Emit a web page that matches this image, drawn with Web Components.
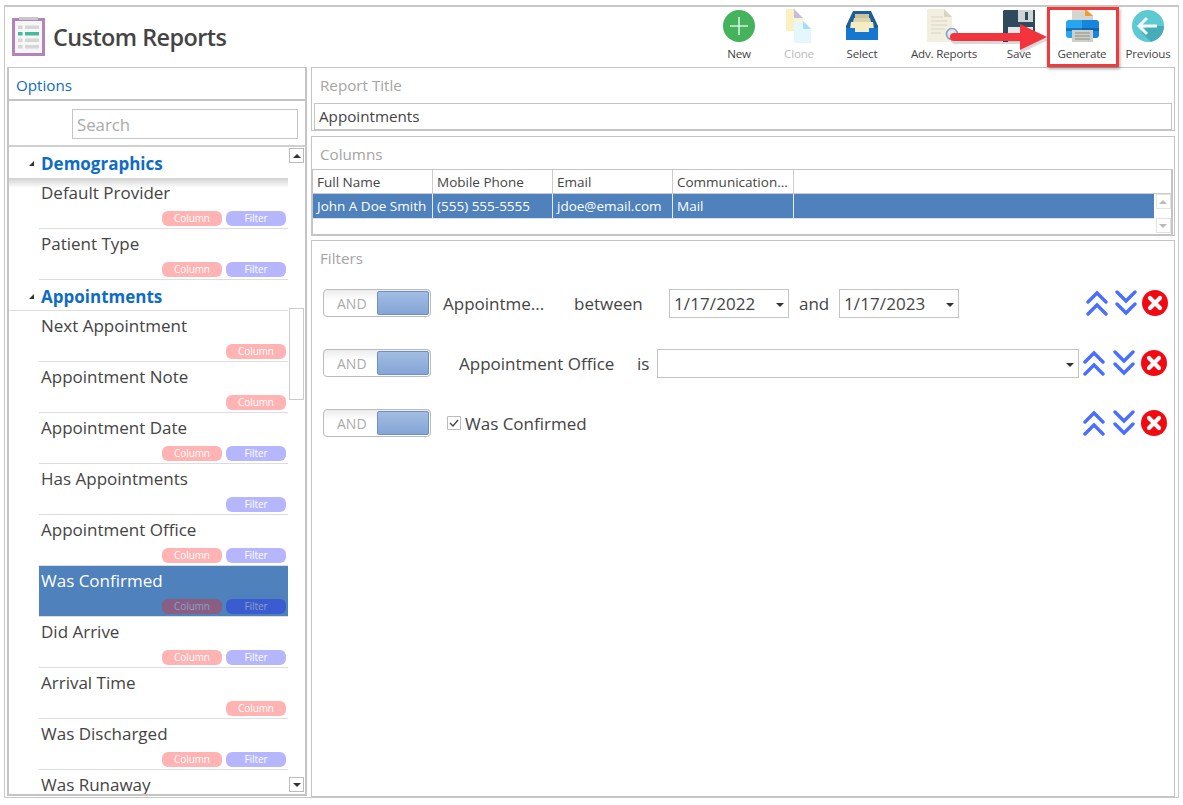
<!DOCTYPE html>
<html><head><meta charset="utf-8"><style>
html,body{margin:0;padding:0;background:#fff}
body{width:1183px;height:805px;overflow:hidden;font-family:"Open Sans","Noto Sans",sans-serif;color:#444}
</style></head><body>
<report-app></report-app>
<script>
const def=(n,html,attrs)=>{customElements.define(n,class extends HTMLElement{connectedCallback(){if(this.shadowRoot)return;const r=this.attachShadow({mode:'open'});r.innerHTML=typeof html==='function'?html(this):html;}})};

const ICONS={
new:`<svg width="32" height="32" viewBox="0 0 32 32"><circle cx="16" cy="16" r="16" fill="#45b35c"/><path d="M16 7v18M7 16h18" stroke="#d6f0dc" stroke-width="1.6"/></svg>`,
clone:`<svg width="26" height="34" viewBox="0 0 26 34"><path d="M0 0h9v22H0z" fill="#fdf0c0"/><path d="M8 0l9 9H8z" fill="#c5bddd"/><path d="M8 9h9v13H8z" fill="#fdf3cf"/><path d="M8 12h9l8 8v14H8z" fill="#e4f7fb"/><path d="M17 12l8 8h-8z" fill="#a9ddf3"/></svg>`,
select:`<svg width="32" height="29" viewBox="0 0 32 29"><path d="M7 0h18l7 15v14H0V15z" fill="#1b5f96"/><path d="M9 3h14v5H9z" fill="#c9c3a2"/><path d="M8 7h16l1 4H7z" fill="#dcd4ab"/><path d="M5 11h22l1 7H4z" fill="#f5ecc3"/><path d="M0 17h9v4h14v-4h9v12H0z" fill="#1578d0"/><path d="M9 17h14v4H9z" fill="#f5ecc3"/></svg>`,
adv:`<svg width="34" height="34" viewBox="0 0 34 34"><path d="M0 0h17l8 8v25H0z" fill="#f2efe0"/><path d="M17 0l8 8h-8z" fill="#d9d5c0"/><path d="M4 8h12M4 12h16M4 16h16M4 20h14M4 24h10" stroke="#d8d5c4" stroke-width="1"/><circle cx="25" cy="25" r="5.5" fill="#dfe9f7" stroke="#8c9ec0" stroke-width="1.6"/></svg>`,
save:`<svg width="32" height="32" viewBox="0 0 32 32"><path d="M1 0h31v32H0V1z" fill="#2f4a5c"/><path d="M15 0h15v12H15z" fill="#cfd4d4"/><path d="M22 2h3v8h-3z" fill="#2f4a5c"/><path d="M5 17h25v15H5z" fill="#e6e8e8"/></svg>`,
gen:`<svg width="33" height="33" viewBox="0 0 33 33"><path d="M6 0h14l7 6v9H6z" fill="#d5d5d0"/><path d="M19 0l8 7h-8z" fill="#f29a2e"/><path d="M3 11h14v18H3a3 3 0 0 1-3-3V14a3 3 0 0 1 3-3z" fill="#27a5ee"/><path d="M16 11h14a3 3 0 0 1 3 3v12a3 3 0 0 1-3 3H16z" fill="#1784de"/><path d="M0 19h33v3H0z" fill="#0c4f8a" opacity=".55"/><path d="M6 21h21v12H6z" fill="#cfcfca"/><path d="M9 24h15M9 27h15M9 30h15" stroke="#8d8d88" stroke-width="1.2"/></svg>`,
prev:`<svg width="32" height="32" viewBox="0 0 32 32"><circle cx="16" cy="16" r="16" fill="#5dc9d3"/><path d="M16 16l16 0a16 16 0 0 1-13 15.7L9 22z" fill="#45acb8"/><path d="M15 8l-8 8 8 8M7 16h18" fill="none" stroke="#f2fbfc" stroke-width="3"/></svg>`
};

def('tool-item',h=>`<style>
:host{display:flex;flex-direction:column;align-items:center;width:${h.getAttribute('w')}px;height:59px;box-sizing:border-box;padding-top:1px;font:11.6px "Open Sans",sans-serif;letter-spacing:-.2px;color:${h.hasAttribute('dim')?'#bbb':'#444'}}
.i{height:35px;display:flex;align-items:center;justify-content:center}
.l{margin-top:3px;line-height:16px;white-space:nowrap}
</style><div class="i">${ICONS[h.getAttribute('icon')]}</div><div class="l"><slot></slot></div>`);

def('field-chip',h=>{const c=h.getAttribute('kind')=='c',s=h.hasAttribute('sel');
return `<style>:host{display:block;width:60px;height:15px;border-radius:6px;text-align:center;font:10px/15px "Open Sans",sans-serif;letter-spacing:-.1px;
background:${c?(s?'#8a5e82':'#ffb3b3'):(s?'#3b5cd0':'#b6b6ff')};color:${s?'#8d9fc7':'#fff'}}</style><slot></slot>`});

def('field-item',h=>{const s=h.hasAttribute('sel'),k=(h.getAttribute('chips')||'').split(' ').filter(Boolean);
const chip=x=>`<field-chip kind="${x}" ${s?'sel':''}>${x=='c'?'Column':'Filter'}</field-chip>`;
return `<style>:host{display:block;height:51px;box-sizing:border-box;width:249px;border-bottom:1px solid #ddd;background:${s?'#4f81bd':'transparent'};color:${s?'#fff':'#444'};position:relative}
.t{font-size:17px;line-height:24px;padding:3px 0 0 2px;white-space:nowrap}
.c{display:flex;justify-content:flex-end;gap:4px;padding:0 2px 0 0;margin-top:6px}</style>
<div class="t"><slot></slot></div><div class="c">${k.map(chip).join('')}</div>`});

def('field-group',h=>{const top=h.hasAttribute('top');return `<style>:host{display:block;width:279px}
.h{height:${top?30:31}px;box-sizing:border-box;display:flex;align-items:center;padding:${top?0:'3px'} 0 0 ${top?20:20}px;color:#0f6cc4;font-weight:700;font-size:17px;width:279px;border-bottom:${top?'0':'1px solid #ddd'};position:relative}
.h i{width:0;height:0;border-left:5px solid transparent;border-bottom:5px solid #333;margin-right:7px}
.sh{position:absolute;left:0;right:0;top:30px;height:10px;background:linear-gradient(rgba(0,0,0,.18),rgba(0,0,0,0))}
.b{padding-left:30px}</style><div class="h"><i></i>${h.getAttribute('title')}${top?'<div class="sh"></div>':''}</div><div class="b"><slot></slot></div>`});

def('scroll-bar',`<style>:host{display:flex;flex-direction:column;width:15px;height:100%;align-items:center;box-sizing:border-box;padding:1px 0 2px}
.b{width:15px;height:15px;border:1px solid #bbb;box-sizing:border-box;display:flex;align-items:center;justify-content:center;flex:none}
.t{width:15px;height:92px;margin-top:145px;border:1px solid #ccc;box-sizing:border-box;flex:none}
i{display:block;width:0;height:0;border-left:4px solid transparent;border-right:4px solid transparent}
.u i{border-bottom:4px solid #333}.d i{border-top:4px solid #333}.d{margin-top:auto}</style>
<div class="b u"><i></i></div><div class="t"></div><div class="b d"><i></i></div>`);

def('options-panel',`<style>:host{display:flex;flex-direction:column;width:300px;height:729px;box-sizing:border-box;border:1px solid #c4c4c4;border-width:1px 2px 2px 2px;overflow:hidden}
.o{height:33px;box-sizing:border-box;border-bottom:2px solid #c4c4c4;font-size:15.2px;color:#0f6cc4;padding:7px 0 0 7px;line-height:20px;flex:none}
.s{height:46px;box-sizing:border-box;border-bottom:2px solid #d0d0d0;flex:none;padding:8px 7px 0 63px}
.s div{height:30px;border:1px solid #c4c4c4;box-sizing:border-box;width:226px;font-size:16.8px;color:#aaa;line-height:29px;padding-left:4px}
.m{flex:1;display:flex;min-height:0;overflow:hidden}
.l{width:280px;flex:none;overflow:hidden;height:100%;padding-top:1px;box-sizing:border-box}</style>
<div class="o">Options</div><div class="s"><div>Search</div></div>
<div class="m"><div class="l"><slot></slot></div><scroll-bar></scroll-bar></div>`);

def('titled-box',h=>`<style>:host{display:block;border:1px solid #c4c4c4;box-sizing:border-box;height:${h.getAttribute('h')}px;flex:none}
.t{font-size:15.2px;color:#a4a4a4;line-height:20px;padding:7px 0 0 8px;height:32px;box-sizing:border-box}</style><div class="t">${h.getAttribute('title')}</div><slot></slot>`);

def('title-input',`<style>:host{display:block;margin:3px 2px 0;height:27px;border:1px solid #c4c4c4;box-sizing:border-box;font-size:15.2px;line-height:25px;padding-left:4px;color:#444}</style><slot></slot>`);

def('columns-grid',()=>{const cols=[['Full Name','John A Doe Smith',120],['Mobile Phone','(555) 555-5555',120],['Email','jdoe@email.com',120],['Communication...','Mail',121]];
const row=(i)=>cols.map(c=>`<div style="width:${c[2]}px">${c[i]}</div>`).join('')+'<div style="flex:1"></div>';
return `<style>:host{display:flex;flex-direction:column;margin:0 1px 0 0;border:solid #c4c4c4;border-width:1px 2px 2px 1px;height:67px;box-sizing:border-box;font-size:13.5px;position:relative}
.r{display:flex;height:24px;line-height:24px;flex:none}.r div{box-sizing:border-box;padding-left:4px;border-right:1px solid #ccc;white-space:nowrap;overflow:hidden}.r div:last-child{border-right:0}
.a{background:#4f81bd;color:#fff;margin-right:17px;border-bottom:1px solid #d8e2ef}.a div{border-right:1px solid #e4ecf5}
.hd{border-bottom:1px solid #ccc;height:23px;line-height:25px}
.sb{position:absolute;right:0;top:24px;width:16px;height:39px;display:flex;flex-direction:column;justify-content:space-between;align-items:center}
.sb span{display:flex;width:15px;height:15px;border:1px solid #e2e2e2;box-sizing:border-box;align-items:center;justify-content:center}
i{display:block;width:0;height:0;border-left:4px solid transparent;border-right:4px solid transparent}</style>
<div class="r hd">${row(0)}</div><div class="r a">${row(1)}</div>
<div class="sb"><span><i style="border-bottom:4px solid #bbb"></i></span><span><i style="border-top:4px solid #bbb"></i></span></div>`});

def('and-toggle',`<style>:host{display:block;width:108px;height:28px;box-sizing:border-box;border:1px solid #bbb;border-radius:4px;position:relative;font-size:14px;color:#aaa;line-height:28px;padding-left:13px;background:linear-gradient(#ececec,#fff 40%);flex:none}
b{position:absolute;right:1px;top:1px;width:50px;border:1px solid #6e8fc4;border-radius:2px;box-sizing:content-box;height:22px;background:linear-gradient(#a2bde3,#84a5d6)}</style>AND<b></b>`);

def('date-pick',h=>`<style>:host{display:flex;align-items:center;box-sizing:border-box;height:29px;width:${h.getAttribute('w')}px;border:1px solid #c4c4c4;font-size:17px;letter-spacing:.1px;padding-left:4px;color:#444;position:relative;flex:none}
i{position:absolute;right:4px;top:13px;width:0;height:0;border-left:4px solid transparent;border-right:4px solid transparent;border-top:4px solid #333}</style><slot></slot><i></i>`);

const UP=`<svg width="22" height="26" viewBox="0 0 22 26"><path d="M2 12l9-9 9 9M2 24l9-9 9 9" fill="none" stroke="#4a6eff" stroke-width="3.4" stroke-linecap="round" stroke-linejoin="miter"/></svg>`;
const DN=`<svg width="22" height="26" viewBox="0 0 22 26"><path d="M2 2l9 9 9-9M2 14l9 9 9-9" fill="none" stroke="#4a6eff" stroke-width="3.4" stroke-linecap="round"/></svg>`;
const X=`<svg width="26" height="26" viewBox="0 0 26 26"><circle cx="13" cy="13" r="13" fill="#f10a12"/><path d="M8 8l10 10M18 8L8 18" stroke="#fff" stroke-width="4.2" stroke-linecap="round"/></svg>`;

def('row-actions',h=>`<style>:host{display:flex;align-items:center;margin-left:auto;flex:none;gap:${h.getAttribute('g1')}px}svg{display:block}.x{margin-left:${h.getAttribute('g2')-h.getAttribute('g1')}px}</style>${UP}${DN}<span class="x">${X}</span>`);

def('filter-row',h=>`<style>:host{display:flex;align-items:center;height:30px;font-size:17px;padding:0 ${h.getAttribute('pr')||7}px 0 11px;white-space:nowrap;color:#444}
</style><slot></slot>`);

def('filters-body',`<style>:host{display:flex;flex-direction:column;gap:30px;padding-top:15px}</style><slot></slot>`);

def('flow-cell',h=>`<style>:host{display:block;flex:none;width:${h.getAttribute('w')}px;white-space:nowrap}</style><slot></slot>`);

def('page-head',`<style>:host{display:flex;align-items:flex-start;height:60px;box-sizing:border-box;position:relative}
.lg{margin:10px 0 0 7px;flex:none}
h1{font-size:23.4px;font-weight:600;letter-spacing:-.55px;margin:0 0 0 8px;line-height:32px;padding-top:14px;color:#444;white-space:nowrap}
.t{display:flex;margin-left:auto;margin-right:1px}
.hl{position:absolute;left:1042px;top:0;width:72px;height:60px;box-sizing:border-box;border:3px solid #ee3b3b;box-shadow:1px 2px 3px rgba(0,0,0,.35)}
.ar{position:absolute;left:942px;top:17px}</style>
<svg class="lg" width="33" height="39" viewBox="0 0 33 39"><path d="M0 1h33v38H0z" fill="#b384b8"/><path d="M3 4h27v32H3z" fill="#f6f6f6"/><path d="M7 0h19v3H7z" fill="#c8c8c8"/><path d="M6 8.5h4.500v3.500H6zM13 8.500h14v3.500H13zM6 21.500h4.500v3.500H6zM13 21.500h14v3.500H13zM6 28h4.500v3.500H6zM13 28h14v3.500H13z" fill="#d6d6d6"/><path d="M6 15h4.500v3.500H6zM13 15h14v3.500H13z" fill="#43bb9c"/></svg>
<h1>Custom Reports</h1>
<div class="t"><slot></slot></div>
<div class="hl"></div>
<svg class="ar" width="104" height="30" viewBox="0 0 104 30"><path d="M7 10h66V1l27 13-27 13v-9H7a4 4 0 0 1 0-8z" fill="#000" opacity=".15" transform="translate(1,2)"/><path d="M7 9h66V0l27 13-27 13v-9H7a4 4 0 0 1 0-8z" fill="#f4343d"/></svg>`);

def('report-app',`<style>:host{display:block;position:absolute;left:4px;top:5px;width:1175px;height:793px;box-sizing:border-box;border:2px solid #c8c8c8;border-width:2px 1px 1px 1px}
.b{display:flex;gap:4px;padding-left:2px}
.r{display:flex;flex-direction:column;width:864px}
.g5{margin-top:5px}.g4{margin-top:4px}</style>
<page-head>
<tool-item w="60" icon="new">New</tool-item><tool-item w="60" icon="clone" dim>Clone</tool-item><tool-item w="66" icon="select">Select</tool-item><tool-item w="98" icon="adv">Adv. Reports</tool-item><tool-item w="52" icon="save">Save</tool-item><tool-item w="74" icon="gen">Generate</tool-item><tool-item w="58" icon="prev">Previous</tool-item>
</page-head>
<div class="b">
<options-panel>
<field-group title="Demographics" top>
<field-item chips="c f">Default Provider</field-item><field-item chips="c f">Patient Type</field-item></field-group>
<field-group title="Appointments">
<field-item chips="c">Next Appointment</field-item><field-item chips="c">Appointment Note</field-item><field-item chips="c f">Appointment Date</field-item><field-item chips="f">Has Appointments</field-item><field-item chips="c f">Appointment Office</field-item><field-item chips="c f" sel>Was Confirmed</field-item><field-item chips="c f">Did Arrive</field-item><field-item chips="c">Arrival Time</field-item><field-item chips="c f">Was Discharged</field-item><field-item>Was Runaway</field-item></field-group>
</options-panel>
<div class="r">
<titled-box title="Report Title" h="64"><title-input>Appointments</title-input></titled-box>
<titled-box class="g5" title="Columns" h="100"><columns-grid></columns-grid></titled-box>
<titled-box class="g4" title="Filters" h="557"><filters-body>
<filter-row pr="6"><and-toggle></and-toggle><flow-cell w="131" style="margin-left:12px">Appointme...</flow-cell><flow-cell w="95">between</flow-cell><date-pick w="120">1/17/2022</date-pick><flow-cell w="40" style="padding-left:10px;width:40px">and</flow-cell><date-pick w="120">1/17/2023</date-pick><row-actions g1="7" g2="5"></row-actions></filter-row>
<filter-row pr="7"><and-toggle></and-toggle><flow-cell w="178" style="margin-left:28px">Appointment Office</flow-cell><flow-cell w="20">is</flow-cell><date-pick w="422"></date-pick><row-actions g1="8" g2="6"></row-actions></filter-row>
<filter-row pr="7"><and-toggle></and-toggle><svg width="14" height="14" viewBox="0 0 14 14" style="margin-left:16px;margin-right:4px;flex:none"><path d="M.5.5h13v13H.5z" fill="#fff" stroke="#bbb"/><path d="M3 7l3 3 5-6" fill="none" stroke="#444" stroke-width="1.4"/></svg><span>Was Confirmed</span><row-actions g1="8" g2="6"></row-actions></filter-row>
</filters-body></titled-box>
</div></div>`);
</script>
</body></html>
